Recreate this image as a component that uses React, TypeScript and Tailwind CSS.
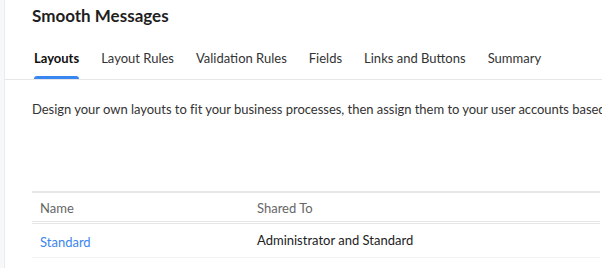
import React from "react";

export default function App() {
  const tabs = ["Layouts", "Layout Rules", "Validation Rules", "Fields", "Links and Buttons", "Summary"];
  return (
    <div className="flex h-[268px] w-[602px] overflow-hidden bg-white" style={{ fontFamily: "Lato, 'Open Sans', sans-serif" }}>
      <div className="w-[5px] shrink-0 border-r border-[#ececf0] bg-[#f7f8fa]" />
      <div className="flex min-w-0 flex-1 flex-col overflow-hidden">
        <h1 className="mt-[4px] pl-[27px] text-[17px] font-bold leading-[24px] text-[#1f1f1f]">Smooth Messages</h1>
        <div className="mt-[18px] flex gap-[22px] border-b border-[#e6e6e6] pl-[29px]">
          {tabs.map((t, i) => (
            <div key={t} className="relative flex h-[33px] items-start">
              <span className={`whitespace-nowrap text-[13px] leading-[24px] ${i === 0 ? "font-bold text-[#111]" : "text-[#333]"}`}>{t}</span>
              {i === 0 && <div className="absolute bottom-0 left-0 right-0 h-[3px] rounded-t-sm bg-[#3a86f0]" />}
            </div>
          ))}
        </div>
        <p className="mt-[17px] whitespace-nowrap pl-[27px] text-[13px] leading-[24px] tracking-[-0.03px] text-[#333]">
          Design your own layouts to fit your business processes, then assign them to your user accounts based on profiles.
        </p>
        <div className="ml-[27px] mr-[2px] mt-[70px] border-t-2 border-[#e6e6e6]">
          <div className="flex h-[31px] items-center border-b-[3px] border-double border-[#e6e6e6] pt-[4px] text-[13px] text-[#666]">
            <div className="w-[225px] pl-[8px]">Name</div>
            <div>Shared To</div>
          </div>
          <div className="flex h-[34px] items-center border-b border-[#f2f2f2] text-[13px]">
            <div className="w-[225px] pl-[8px] pt-[5px] text-[#3c85ee]">Standard</div>
            <div className="pt-[1px] text-[#222]">Administrator and Standard</div>
          </div>
        </div>
      </div>
    </div>
  );
}
